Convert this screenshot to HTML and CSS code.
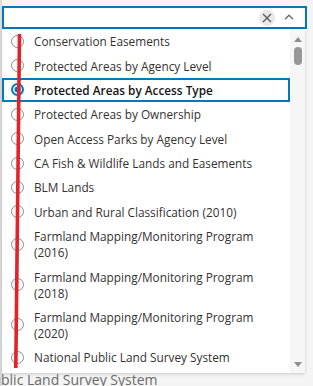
FILE: index.html
```html
<!DOCTYPE html>
<html>
<head>
<meta charset="utf-8">
<link rel="stylesheet" href="styles.css">
</head>
<body>
<div class="page">
  <div class="combo">
    <div class="combo-input"></div>
    <button class="clear" aria-label="Clear">
      <svg width="10" height="10" viewBox="0 0 10 10"><path d="M1 1 L9 9 M9 1 L1 9" stroke="#5a5a5a" stroke-width="1.3" fill="none"/></svg>
    </button>
    <button class="chevron" aria-label="Close">
      <svg width="10" height="6" viewBox="0 0 10 6"><path d="M1 5.2 L5 1.2 L9 5.2" stroke="#6a6a6a" stroke-width="1.3" fill="none"/></svg>
    </button>
  </div>
  <div class="dropdown">
    <ul class="list">
      <li class="item"><span class="radio"></span><span class="label">Conservation Easements</span></li>
      <li class="item"><span class="radio"></span><span class="label">Protected Areas by Agency Level</span></li>
      <li class="item selected"><span class="radio"></span><span class="label">Protected Areas by Access Type</span></li>
      <li class="item"><span class="radio"></span><span class="label">Protected Areas by Ownership</span></li>
      <li class="item"><span class="radio"></span><span class="label">Open Access Parks by Agency Level</span></li>
      <li class="item"><span class="radio"></span><span class="label">CA Fish &amp; Wildlife Lands and Easements</span></li>
      <li class="item"><span class="radio"></span><span class="label">BLM Lands</span></li>
      <li class="item"><span class="radio"></span><span class="label">Urban and Rural Classification (2010)</span></li>
      <li class="item"><span class="radio"></span><span class="label">Farmland Mapping/Monitoring Program (2016)</span></li>
      <li class="item"><span class="radio"></span><span class="label">Farmland Mapping/Monitoring Program (2018)</span></li>
      <li class="item"><span class="radio"></span><span class="label">Farmland Mapping/Monitoring Program (2020)</span></li>
      <li class="item"><span class="radio"></span><span class="label">National Public Land Survey System</span></li>
    </ul>
    <div class="scrollbar">
      <span class="arrow up"></span>
      <span class="thumb"></span>
      <span class="spacer"></span>
      <span class="arrow down"></span>
    </div>
  </div>
  <div class="behind">Public Land Survey System</div>
  <svg class="annotation" width="313" height="386" viewBox="0 0 313 386"><line x1="19.5" y1="34" x2="15.8" y2="368" stroke="#e2232a" stroke-width="3.6"/></svg>
</div>
</body>
</html>
```

FILE: styles.css
```css
* { box-sizing: border-box; }
html, body {
  margin: 0;
  padding: 0;
  background: #ffffff;
}
body {
  width: 313px;
  height: 386px;
  overflow: hidden;
  font-family: "Open Sans", "Lato", sans-serif;
}
.page {
  position: relative;
  width: 313px;
  height: 386px;
  padding-top: 6px;
  background: linear-gradient(to right, #dcdcdc 0, #dcdcdc 2px, #f4f4f4 2px);
}
.combo {
  margin-left: 2px;
  width: 305px;
  height: 23px;
  border: 2px solid #0079c1;
  background: #fff;
  display: flex;
  align-items: center;
  padding-right: 8px;
  gap: 6px;
}
.combo-input { flex: 1; }
.clear, .chevron {
  border: 0;
  padding: 0;
  margin: 0;
  display: flex;
  align-items: center;
  justify-content: center;
  background: transparent;
}
.clear {
  width: 16px;
  height: 16px;
  border-radius: 50%;
  background: #e8e8e8;
}
.chevron {
  width: 16px;
  height: 16px;
  margin-top: -2px;
}
.dropdown {
  margin-left: 2px;
  width: 303px;
  height: 344px;
  background: #fff;
  display: flex;
  overflow: hidden;
  box-shadow: 0 1px 3px rgba(0,0,0,0.18);
}
.list {
  list-style: none;
  margin: 0;
  padding: 0;
  flex: 1;
}
.item {
  display: flex;
  align-items: center;
  padding: 4.2px 8px 4.2px 9px;
  font-size: 11.8px;
  line-height: 16px;
  color: #323232;
}
.item .radio {
  flex: none;
  width: 13px;
  height: 13px;
  border-radius: 50%;
  border: 1px solid #8c8c8c;
  background: #fff;
  margin-right: 10px;
}
.item.selected {
  outline: 2px solid #0079c1;
  outline-offset: -2px;
  color: #151515;
  font-weight: 600;
}
.item.selected .radio {
  border: 2px solid #0079c1;
  box-shadow: inset 0 0 0 1.5px #fff, inset 0 0 0 6px #0079c1;
}
.scrollbar {
  width: 15px;
  flex: none;
  background: #f6f6f6;
  display: flex;
  flex-direction: column;
  align-items: center;
  padding: 8px 0 6px;
}
.arrow {
  width: 0;
  height: 0;
  border-left: 4.5px solid transparent;
  border-right: 4.5px solid transparent;
}
.arrow.up { border-bottom: 5px solid #8f8f8f; }
.arrow.down { border-top: 5px solid #8f8f8f; }
.thumb {
  margin-top: 5px;
  width: 8px;
  height: 18px;
  border-radius: 4px;
  background: #979797;
}
.spacer { flex: 1; }
.behind {
  margin-left: -16px;
  font-size: 14px;
  line-height: 14px;
  color: #6b6b6b;
  white-space: nowrap;
}
.annotation {
  position: absolute;
  left: 0;
  top: 0;
  pointer-events: none;
}
```
